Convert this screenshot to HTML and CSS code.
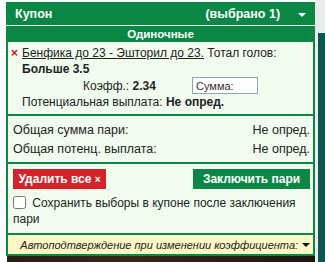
FILE: index.html
```html
<!DOCTYPE html>
<html>
<head>
  <title>Купон</title>
  <link rel="stylesheet" href="styles.css">
</head>
<body>
  <div class="page">
    <div class="main">
      <!-- Coupon -->
      <div class="coupon">
        <div class="coupon-head">
          <span class="head-title">Купон</span>
          <span class="head-count">(выбрано 1)</span>
          <span class="caret"></span>
        </div>
        <div class="section-title">Одиночные</div>

        <div class="coupon-body">
          <!-- single bet -->
          <div class="bet">
            <div class="bet-line">
              <span class="remove">×</span>
              <span><a class="event" href="#">Бенфика до 23 - Эшторил до 23.</a> Тотал голов:<br><b>Больше 3.5</b></span>
            </div>
            <div class="coef-row">
              <span class="coef">Коэфф.: <b>2.34</b></span>
              <input class="stake" type="text" placeholder="Сумма:">
            </div>
            <div class="payout">Потенциальная выплата: <b>Не опред.</b></div>
          </div>

          <!-- totals -->
          <div class="totals">
            <div class="total-row"><span>Общая сумма пари:</span><span>Не опред.</span></div>
            <div class="total-row"><span>Общая потенц. выплата:</span><span>Не опред.</span></div>
          </div>

          <!-- actions -->
          <div class="actions">
            <div class="buttons">
              <button class="btn btn-red">Удалить все <span class="x">×</span></button>
              <button class="btn btn-green">Заключить пари</button>
            </div>
            <label class="keep">
              <input type="checkbox"> Сохранить выборы в купоне после заключения пари
            </label>
          </div>

          <div class="autoconfirm">
            <span>Автоподтверждение при изменении коэффициента:</span>
            <span class="caret dark"></span>
          </div>
        </div>
      </div>
      <div class="backdrop"></div>
    </div>
    <div class="side">
      <div class="scroll"></div>
    </div>
  </div>
</body>
</html>
```

FILE: styles.css
```css
html, body { margin: 0; height: 100%; }
body { font-family: "Liberation Sans", Arial, sans-serif; font-size: 12px; color: #222; background: #fff; }

.page  { display: flex; height: 262px; padding-left: 6px; }
.main  { width: 312px; display: flex; flex-direction: column; padding-top: 2px; }
.side  { width: 7px; display: flex; flex-direction: column; padding-left: 3px; padding-top: 33px; background: #e8ecea; }
.scroll { flex: 1; background: #0f5650; }

/* header */
.coupon-head {
  display: flex; align-items: center;
  height: 23px; padding: 0 9px;
  background: #0a8744; color: #fff;
  font-weight: bold; font-size: 12.5px;
  border-bottom: 1px solid #fff;
}
.head-title { flex: 1; }
.caret {
  width: 0; height: 0; margin: 2px 0 0 18px;
  border-left: 4px solid transparent; border-right: 4px solid transparent;
  border-top: 4px solid #fff;
}
.caret.dark { border-top-color: #111; margin: 1px 0 0 4px; }

.section-title {
  height: 16px; line-height: 16px; text-align: center;
  background: #0a8744; color: #fff; font-weight: bold; font-size: 11.5px;
}

/* body */
.coupon-body { background: #f1fcef; border: 2px solid #0a8744; border-top: 0; }

.bet        { padding: 3px 5px 4px 3px; border-bottom: 2px solid #0a8744; line-height: 16px; }
.bet-line   { display: flex; }
.remove     { color: #d0141c; font-weight: bold; width: 11px; flex: none; }
.event      { color: #222; }
.coef-row   { display: flex; align-items: center; height: 17px; padding-left: 72px; }
.coef       { width: 109px; }
.stake {
  width: 66px; height: 17px; box-sizing: border-box; margin: 0;
  border: 1px solid #8aa4c0; padding: 0 3px;
  font: 11px "Liberation Sans", Arial, sans-serif; background: #fff;
}
.stake::placeholder { color: #333; }
.payout     { padding-left: 11px; }

.totals     { padding: 5px 3px 3px 5px; border-bottom: 2px solid #0a8744; line-height: 19px; font-size: 12.5px; }
.total-row  { display: flex; justify-content: space-between; }

.actions    { padding: 5px 3px 6px 5px; border-bottom: 2px solid #0a8744; }
.buttons    { display: flex; justify-content: space-between; margin-bottom: 6px; }
.btn {
  height: 20px; border: 0; padding: 0 4px; margin: 0;
  color: #fff; font: bold 12px "Liberation Sans", Arial, sans-serif;
}
.btn-red    { background: #d2232a; width: 93px; }
.btn-green  { background: #0a8744; width: 117px; }
.x          { font-size: 10px; }
.keep       { display: block; line-height: 16px; }
.keep input { width: 13px; height: 13px; margin: 0 3px 0 0; vertical-align: -2px; }

.autoconfirm {
  display: flex; align-items: center; justify-content: flex-end;
  height: 19px; padding: 0 3px 0 5px;
  background: #fcf8c6; font-style: italic; font-size: 11px;
}

.backdrop   { flex: 1; margin-left: 1px; background: linear-gradient(90deg, #2a1d13, #3a2618 40%, #1f1510); }
```
